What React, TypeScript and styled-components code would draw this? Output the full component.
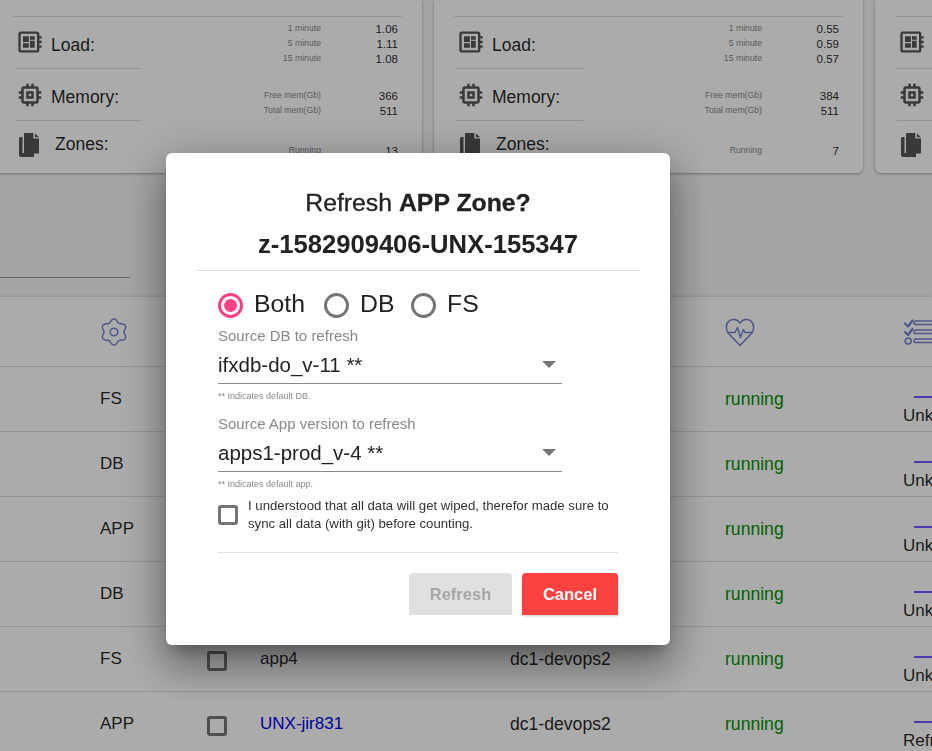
import React from 'react';
import styled, { createGlobalStyle } from 'styled-components';
import { MdDeveloperBoard, MdMemory } from 'react-icons/md';

interface Stat {
  label: string;
  value: string;
}

interface Metric {
  name: string;
  kind: 'load' | 'memory' | 'zones';
  stats: Stat[];
}

const buildMetrics = (load: string[], free: string, running: string): Metric[] => [
  {
    name: 'Load:',
    kind: 'load',
    stats: [
      { label: '1 minute', value: load[0] },
      { label: '5 minute', value: load[1] },
      { label: '15 minute', value: load[2] },
    ],
  },
  {
    name: 'Memory:',
    kind: 'memory',
    stats: [
      { label: 'Free mem(Gb)', value: free },
      { label: 'Total mem(Gb)', value: '511' },
    ],
  },
  {
    name: 'Zones:',
    kind: 'zones',
    stats: [{ label: 'Running', value: running }],
  },
];

const cards: Metric[][] = [
  buildMetrics(['1.06', '1.11', '1.08'], '366', '13'),
  buildMetrics(['0.55', '0.59', '0.57'], '384', '7'),
  buildMetrics(['', '', ''], '', ''),
];

interface ZoneRow {
  type: string;
  name?: string;
  link?: boolean;
  host?: string;
  task: string;
}

const rows: ZoneRow[] = [
  { type: 'FS', task: 'Unknown' },
  { type: 'DB', task: 'Unknown' },
  { type: 'APP', task: 'Unknown' },
  { type: 'DB', task: 'Unknown' },
  { type: 'FS', name: 'app4', host: 'dc1-devops2', task: 'Unknown' },
  { type: 'APP', name: 'UNX-jir831', link: true, host: 'dc1-devops2', task: 'Refresh' },
];

const gearPath = (() => {
  const points: string[] = [];
  for (let i = 0; i < 120; i++) {
    const angle = (i / 120) * Math.PI * 2;
    const r = 11.5 + 1.5 * Math.cos(6 * angle);
    const x = 14 + r * Math.sin(angle);
    const y = 14 - r * Math.cos(angle);
    points.push(`${x.toFixed(2)} ${y.toFixed(2)}`);
  }
  return `M${points.join('L')}Z`;
})();

const GearIcon = () => (
  <svg width="28" height="28" viewBox="0 0 28 28" fill="none" stroke="#7482cc" strokeWidth="1.5">
    <path d={gearPath} />
    <circle cx="14" cy="14" r="3.8" />
  </svg>
);

const HeartIcon = () => (
  <svg width="30" height="30" viewBox="0 0 30 30" fill="none" stroke="#7482cc" strokeWidth="1.5" strokeLinejoin="round">
    <path d="M15 28.5 L3.6 16.6 C0 12.4 1 6 4.6 3.6 C8 1.4 12.4 2.2 15 6.2 C17.6 2.2 22 1.4 25.4 3.6 C29 6 30 12.4 26.4 16.6 Z" />
    <path d="M2 15.5 H10 L12.6 10.5 L15.4 20.5 L18.4 12.5 L20 15.5 H28" />
  </svg>
);

const TaskIcon = () => (
  <svg width="34" height="30" viewBox="0 0 34 30" fill="none" stroke="#7482cc" strokeWidth="1.5" strokeLinejoin="round">
    <path d="M2 6.5 L5 9.5 L9.5 3.5 M2 15 L5 18 L9.5 12" strokeWidth="2.2" strokeLinecap="round" />
    <circle cx="5.2" cy="24" r="3" />
    <rect x="11" y="4" width="24" height="3.6" rx="1.8" />
    <rect x="11" y="13" width="24" height="3.6" rx="1.8" />
    <rect x="11" y="22" width="24" height="3.6" rx="1.8" />
  </svg>
);

const ZonesIcon = () => (
  <svg width="20" height="24" viewBox="0 0 20 24" fill="#555">
    <path d="M0 5.5a1.5 1.5 0 0 1 1.5-1.5H3.5v16H15v4H2a2 2 0 0 1-2-2z" />
    <path d="M6 0h8.4v5.6H20V19.5a1 1 0 0 1-1 1H6a1 1 0 0 1-1-1V1a1 1 0 0 1 1-1z" />
    <path d="M16 0.6 L20 4.2 H16 Z" />
  </svg>
);

const metricIcon = (kind: Metric['kind']) => {
  if (kind === 'load') return <MdDeveloperBoard size={28} />;
  if (kind === 'memory') return <MdMemory size={30} />;
  return <ZonesIcon />;
};

const App: React.FC = () => (
  <Page>
    <GlobalStyle />
    <CardRow>
      {cards.map((metrics, i) => (
        <Card key={i}>
          <CardRule />
          {metrics.map(metric => (
            <MetricRow key={metric.name}>
              <MetricName $kind={metric.kind}>
                <MetricIcon $kind={metric.kind}>{metricIcon(metric.kind)}</MetricIcon>
                <MetricTitle $kind={metric.kind}>{metric.name}</MetricTitle>
              </MetricName>
              <Stats $kind={metric.kind}>
                {metric.stats.map(stat => (
                  <StatRow key={stat.label}>
                    <StatLabel>{stat.label}</StatLabel>
                    <StatValue>{stat.value}</StatValue>
                  </StatRow>
                ))}
              </Stats>
            </MetricRow>
          ))}
        </Card>
      ))}
    </CardRow>

    <FilterBar>
      <FilterLine />
    </FilterBar>

    <Table>
      <HeaderRow>
        <HeaderCell>
          <GearIcon />
        </HeaderCell>
        <span />
        <span />
        <span />
        <HeaderCell>
          <HeartIcon />
        </HeaderCell>
        <HeaderCell>
          <TaskIcon />
        </HeaderCell>
      </HeaderRow>
      {rows.map((row, i) => (
        <Row key={i}>
          <span>{row.type}</span>
          <TableCheck />
          <ZoneName $link={row.link}>{row.name}</ZoneName>
          <HostName>{row.host}</HostName>
          <Running>running</Running>
          <TaskCell>
            <TaskBar />
            <TaskText>{row.task}</TaskText>
          </TaskCell>
        </Row>
      ))}
    </Table>

    <Backdrop>
      <Dialog>
        <Title>
          Refresh <strong>APP Zone?</strong>
        </Title>
        <ZoneTitle>z-1582909406-UNX-155347</ZoneTitle>
        <TitleRule />
        <Body>
          <RadioGroup>
            <RadioOption>
              <Radio $checked />
              <RadioText>Both</RadioText>
            </RadioOption>
            <RadioOption>
              <Radio />
              <RadioText>DB</RadioText>
            </RadioOption>
            <RadioOption>
              <Radio />
              <RadioText>FS</RadioText>
            </RadioOption>
          </RadioGroup>

          <FieldLabel>Source DB to refresh</FieldLabel>
          <Select>
            <span>ifxdb-do_v-11 **</span>
            <Arrow />
          </Select>
          <HelperText>** Indicates default DB.</HelperText>

          <FieldLabel>Source App version to refresh</FieldLabel>
          <Select>
            <span>apps1-prod_v-4 **</span>
            <Arrow />
          </Select>
          <HelperText>** Indicates default app.</HelperText>

          <Agreement>
            <AgreeCheck />
            <AgreeText>
              I understood that all data will get wiped, therefor made sure to sync all data (with git) before counting.
            </AgreeText>
          </Agreement>
          <BodyRule />
          <Actions>
            <RefreshButton>Refresh</RefreshButton>
            <CancelButton>Cancel</CancelButton>
          </Actions>
        </Body>
      </Dialog>
    </Backdrop>
  </Page>
);

const GlobalStyle = createGlobalStyle`
  html, body {
    margin: 0;
    padding: 0;
    overflow: hidden;
  }
  * {
    box-sizing: border-box;
  }
`;

const Page = styled.div`
  width: 932px;
  height: 751px;
  overflow: hidden;
  background: #f7f7f7;
  font-family: "Liberation Sans", Arial, sans-serif;
  color: rgba(0, 0, 0, 0.87);
`;

const CardRow = styled.div`
  display: flex;
  gap: 12px;
  margin-left: -7px;
  width: 1400px;
`;

const Card = styled.section`
  flex: none;
  width: 429px;
  height: 173px;
  padding: 16px 20px 0;
  background: #fff;
  border-radius: 0 0 6px 6px;
  box-shadow: 0 1px 3px rgba(0, 0, 0, 0.35);
`;

const CardRule = styled.div`
  height: 1px;
  background: #e0e0e0;
`;

const MetricRow = styled.div`
  display: flex;
  justify-content: space-between;
  height: 52px;
`;

const MetricName = styled.div<{ $kind: Metric['kind'] }>`
  display: flex;
  align-items: flex-start;
  width: 127px;
  margin-left: 2px;
  border-bottom: ${p => (p.$kind === 'zones' ? 'none' : '1px solid #e0e0e0')};
`;

const MetricIcon = styled.span<{ $kind: Metric['kind'] }>`
  display: flex;
  width: 36px;
  padding-top: ${p => (p.$kind === 'zones' ? 12 : 11)}px;
  padding-left: ${p => (p.$kind === 'load' ? 1 : p.$kind === 'zones' ? 4 : 0)}px;
  color: #555;
`;

const MetricTitle = styled.span<{ $kind: Metric['kind'] }>`
  font-size: 17.5px;
  line-height: 20px;
  padding-top: ${p => (p.$kind === 'zones' ? 13 : 18)}px;
  margin-left: ${p => (p.$kind === 'zones' ? 4 : 0)}px;
`;

const Stats = styled.div<{ $kind: Metric['kind'] }>`
  width: 145px;
  padding-top: ${p => (p.$kind === 'load' ? 3 : p.$kind === 'memory' ? 18 : 21)}px;
  padding-right: 4px;
`;

const StatRow = styled.div`
  display: flex;
  justify-content: flex-end;
  height: 15px;
  align-items: center;
`;

const StatLabel = styled.span`
  font-size: 8.7px;
  color: #888;
`;

const StatValue = styled.span`
  width: 77px;
  padding-top: 2px;
  text-align: right;
  font-size: 11.5px;
`;

const FilterBar = styled.div`
  height: 124px;
  padding-top: 104px;
`;

const FilterLine = styled.div`
  width: 130px;
  height: 1px;
  background: #999;
`;

const Table = styled.section`
  background: #fff;
  box-shadow: 0 -1px 3px rgba(0, 0, 0, 0.12);
`;

const columns = `
  display: grid;
  grid-template-columns: 107px 53px 250px 215px 178px 60px;
  padding-left: 100px;
  align-items: center;
  border-bottom: 1px solid #e0e0e0;
`;

const HeaderRow = styled.div`
  ${columns}
  height: 70px;
`;

const HeaderCell = styled.div`
  display: flex;
`;

const Row = styled.div`
  ${columns}
  height: 65px;
  font-size: 17px;
`;

const TableCheck = styled.span`
  width: 20px;
  height: 20px;
  margin-top: 4px;
  border: 3px solid #777;
  border-radius: 3px;
`;

const ZoneName = styled.span<{ $link?: boolean }>`
  color: ${p => (p.$link ? '#0000ee' : 'inherit')};
`;

const HostName = styled.span`
  font-size: 17.6px;
`;

const Running = styled.span`
  padding-top: 1px;
  font-size: 17.6px;
  color: #009200;
`;

const TaskCell = styled.div`
  display: flex;
  flex-direction: column;
  padding-top: 22px;
`;

const TaskBar = styled.div`
  width: 40px;
  height: 2px;
  margin-left: 11px;
  margin-bottom: 9px;
  background: #7a55ff;
`;

const TaskText = styled.span`
  line-height: 18px;
`;

const Backdrop = styled.div`
  position: fixed;
  inset: 0;
  padding: 153px 0 0 166px;
  background: rgba(0, 0, 0, 0.33);
`;

const Dialog = styled.div`
  width: 504px;
  height: 492px;
  padding-top: 34px;
  background: #fff;
  border-radius: 6px;
  text-align: center;
  box-shadow:
    0 11px 15px -7px rgba(0, 0, 0, 0.3),
    0 24px 38px 3px rgba(0, 0, 0, 0.22),
    0 9px 46px 8px rgba(0, 0, 0, 0.2);
`;

const Title = styled.div`
  font-size: 24.8px;
  line-height: 32px;
  color: #222;
  -webkit-text-stroke: 0.3px #222;
`;

const ZoneTitle = styled.div`
  margin-top: 9px;
  font-size: 25.6px;
  line-height: 32px;
  font-weight: 700;
  color: #222;
`;

const TitleRule = styled.div`
  height: 1px;
  margin: 10px 30px 0;
  background: #e0e0e0;
`;

const Body = styled.div`
  padding: 21px 52px 0;
  text-align: left;
`;

const RadioGroup = styled.div`
  display: grid;
  grid-template-columns: 106px 87px auto;
  height: 25px;
`;

const RadioOption = styled.div`
  display: flex;
  align-items: center;
  gap: 11px;
`;

const Radio = styled.span<{ $checked?: boolean }>`
  display: flex;
  align-items: center;
  justify-content: center;
  width: 25px;
  height: 25px;
  border: 3px solid ${p => (p.$checked ? '#ff4081' : '#757575')};
  border-radius: 50%;
  &::after {
    content: '';
    width: 13px;
    height: 13px;
    border-radius: 50%;
    background: ${p => (p.$checked ? '#ff4081' : 'transparent')};
  }
`;

const RadioText = styled.span`
  font-size: 24.8px;
  margin-top: -2px;
  color: #222;
`;

const FieldLabel = styled.div`
  margin-top: 10px;
  font-size: 15px;
  line-height: 18px;
  color: #888;
`;

const Select = styled.div`
  display: flex;
  align-items: center;
  justify-content: space-between;
  width: 344px;
  height: 39px;
  padding: 1px 6px 0 0;
  border-bottom: 1px solid #8a8a8a;
  font-size: 20.5px;
  color: #222;
`;

const Arrow = styled.span`
  width: 0;
  height: 0;
  border-left: 7px solid transparent;
  border-right: 7px solid transparent;
  border-top: 7px solid #757575;
`;

const HelperText = styled.div`
  margin: 6px 0 13px;
  font-size: 9px;
  line-height: 12px;
  color: #888;
`;

const Agreement = styled.div`
  display: flex;
  align-items: center;
  gap: 10px;
  margin-top: -6px;
  width: 400px;
`;

const AgreeCheck = styled.span`
  flex: none;
  width: 20px;
  height: 20px;
  border: 3px solid #757575;
  border-radius: 3px;
`;

const AgreeText = styled.span`
  font-size: 13.2px;
  line-height: 18px;
  color: #333;
`;

const BodyRule = styled.div`
  width: 400px;
  height: 1px;
  margin-top: 19px;
  background: #e0e0e0;
`;

const Actions = styled.div`
  display: flex;
  justify-content: flex-end;
  gap: 10px;
  width: 400px;
  margin-top: 20px;
`;

const ActionButton = styled.button`
  height: 42px;
  border: 0;
  border-radius: 4px 4px 0 0;
  font-family: inherit;
  font-size: 16.5px;
  font-weight: 700;
`;

const RefreshButton = styled(ActionButton)`
  width: 103px;
  background: #e0e0e0;
  color: #a6a6a6;
`;

const CancelButton = styled(ActionButton)`
  width: 96px;
  background: #fb4240;
  color: #fff;
  box-shadow: 0 1px 3px rgba(0, 0, 0, 0.2);
`;

export default App;
